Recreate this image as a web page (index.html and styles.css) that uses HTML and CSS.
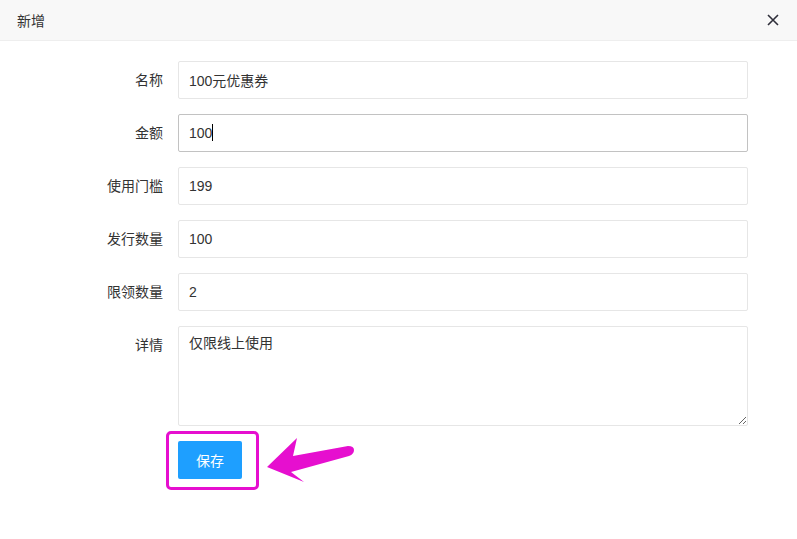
FILE: index.html
```html
<!DOCTYPE html>
<html lang="zh-CN">
<head>
  <meta charset="UTF-8" />
  <meta name="viewport" content="width=device-width, initial-scale=1.0" />
  <title>新增</title>
  <link rel="stylesheet" href="styles.css">
</head>
<body>
  <div class="dialog">
    <div class="dialog-head">
      <span class="dialog-title">新增</span>
      <svg class="close" width="12" height="12" viewBox="0 0 12 12">
        <path d="M1 1 L11 11 M11 1 L1 11" stroke="#2f2f3a" stroke-width="1.6" fill="none"/>
      </svg>
    </div>

    <form class="form">
      <label class="label">名称</label>
      <input class="input" type="text" value="100元优惠券">

      <label class="label">金额</label>
      <div class="input focused">100<span class="caret"></span></div>

      <label class="label">使用门槛</label>
      <input class="input" type="text" value="199">

      <label class="label">发行数量</label>
      <input class="input" type="text" value="100">

      <label class="label">限领数量</label>
      <input class="input" type="text" value="2">

      <label class="label">详情</label>
      <textarea class="textarea">仅限线上使用</textarea>

      <span></span>
      <div class="actions">
        <button class="btn" type="button">保存</button>
      </div>
    </form>

    <!-- annotation -->
    <div class="highlight"></div>
    <svg class="arrow" width="100" height="60" viewBox="260 430 100 60">
      <path d="M267 467 L297 438 L293 456 L348 446 Q354 446 354 450 Q354 454 349 456 L291 472 L304 482 Z" fill="#e60fcf"/>
    </svg>
  </div>
</body>
</html>
```

FILE: styles.css
```css
* {
  box-sizing: border-box;
}
body {
  margin: 0;
  background: #fff;
  font-family: "Liberation Sans", "Noto Sans CJK SC", sans-serif;
  font-size: 14px;
  color: #333;
}
.dialog {
  position: relative;
  width: 797px;
  height: 539px;
  background: #fff;
}
.dialog-head {
  height: 41px;
  background: #f8f8f8;
  border-bottom: 1px solid #eee;
  display: flex;
  align-items: center;
  justify-content: space-between;
  padding: 0 18px 0 17px;
}
.dialog-title {
  font-size: 14px;
  color: #333;
}
.form {
  display: grid;
  grid-template-columns: 163px 570px;
  column-gap: 15px;
  row-gap: 15px;
  padding-top: 20px;
  align-items: start;
}
.label {
  text-align: right;
  line-height: 38px;
  color: #333;
}
.input {
  height: 38px;
  border: 1px solid #e6e6e6;
  border-radius: 2px;
  padding: 0 10px;
  font: inherit;
  color: #333;
  background: #fff;
  outline: none;
  line-height: 36px;
}
.focused {
  border-color: #c2c2c2;
}
.caret {
  display: inline-block;
  width: 1px;
  height: 17px;
  background: #000;
  vertical-align: -3px;
}
.textarea {
  height: 100px;
  border: 1px solid #e6e6e6;
  border-radius: 2px;
  padding: 6px 10px;
  font: inherit;
  line-height: 20px;
  color: #333;
  resize: both;
  outline: none;
}
.actions {
  display: flex;
}
.btn {
  height: 38px;
  padding: 0 18px;
  border: none;
  border-radius: 2px;
  background: #1e9fff;
  color: #fff;
  font: inherit;
  font-size: 14px;
}
.highlight {
  position: absolute;
  left: 166px;
  top: 431px;
  width: 93px;
  height: 59px;
  border: 3px solid #e60fcf;
  border-radius: 5px;
}
.arrow {
  position: absolute;
  left: 260px;
  top: 430px;
}
```
